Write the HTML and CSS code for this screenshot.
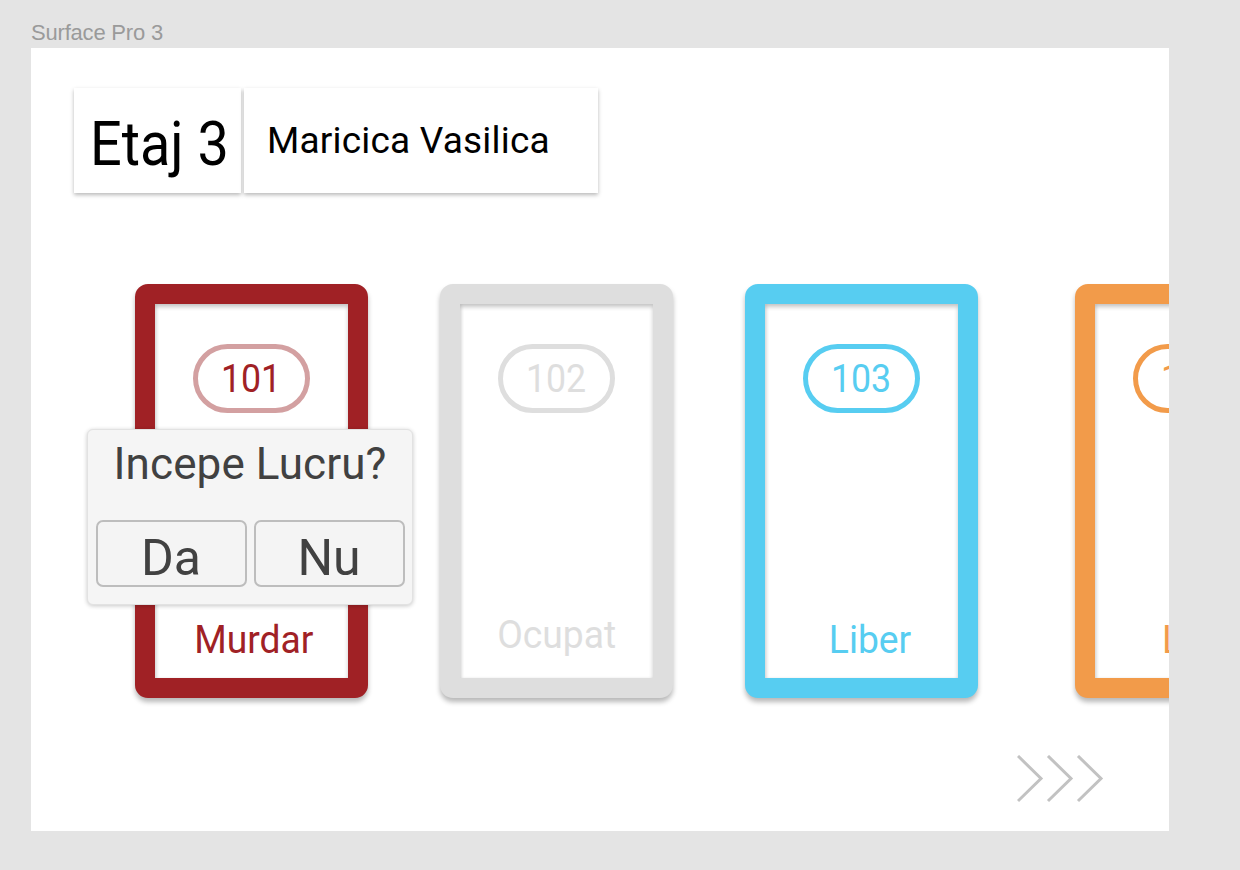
FILE: index.html
```html
<!DOCTYPE html>
<html lang="ro">
<head>
<meta charset="utf-8">
<title>Etaj 3</title>
<link rel="stylesheet" href="styles.css">
</head>
<body>
<div class="device-label">Surface Pro 3</div>
<div class="frame">
  <header class="header">
    <div class="hbox floor"><span class="floor-text">Etaj 3</span></div>
    <div class="hbox person">Maricica Vasilica</div>
  </header>
  <section class="rooms">
    <div class="room room-dirty">
      <div class="pill"><span class="narrow">101</span></div>
      <div class="status"><span class="narrow">Murdar</span></div>
      <div class="popup">
        <div class="popup-title">Incepe Lucru?</div>
        <div class="popup-actions">
          <button class="btn">Da</button>
          <button class="btn">Nu</button>
        </div>
      </div>
    </div>
    <div class="room room-busy">
      <div class="pill"><span class="narrow">102</span></div>
      <div class="status"><span class="narrow">Ocupat</span></div>
    </div>
    <div class="room room-free">
      <div class="pill"><span class="narrow">103</span></div>
      <div class="status"><span class="narrow">Liber</span></div>
    </div>
    <div class="room room-other">
      <div class="pill"><span class="narrow">104</span></div>
      <div class="status"><span class="narrow">Lucru</span></div>
    </div>
  </section>
  <footer class="nav">
    <svg class="chevrons" width="88" height="48" viewBox="0 0 88 48" fill="none" stroke="#c2c2c2" stroke-width="3">
      <path d="M1 1 L24 23.5 L1 46"/>
      <path d="M31 1 L54 23.5 L31 46"/>
      <path d="M61 1 L84 23.5 L61 46"/>
    </svg>
  </footer>
</div>
</body>
</html>
```
FILE: styles.css
```css
html, body {
  margin: 0;
  padding: 0;
}
body {
  background: #e4e4e4;
  width: 1240px;
  height: 870px;
  overflow: hidden;
}
.device-label {
  font-family: "Liberation Sans", Arial, sans-serif;
  font-size: 22px;
  letter-spacing: -0.2px;
  color: #9a9a9a;
  height: 48px;
  padding: 22px 0 0 31px;
  line-height: 22px;
  box-sizing: border-box;
}
.frame {
  margin-left: 31px;
  width: 1138px;
  height: 783px;
  background: #fff;
  overflow: hidden;
  display: flex;
  flex-direction: column;
  font-family: Roboto, "Noto Sans", sans-serif;
}
.header {
  display: flex;
  gap: 3px;
  margin: 40px 0 0 43px;
}
.hbox {
  height: 105px;
  background: #fff;
  box-shadow: 0 2px 4px rgba(0,0,0,0.28);
  display: flex;
  align-items: center;
  color: #000;
  box-sizing: border-box;
}
.floor {
  width: 167px;
  padding: 6px 0 0 16px;
  font-size: 62px;
}
.floor-text {
  display: inline-block;
  transform: scaleX(0.9);
  transform-origin: left center;
  white-space: nowrap;
}
.person {
  width: 354px;
  padding-left: 23px;
  font-size: 37px;
  letter-spacing: 0.2px;
}
.rooms {
  display: flex;
  gap: 72px;
  margin: 91px 0 0 104px;
}
.room {
  position: relative;
  flex: 0 0 auto;
  width: 233px;
  height: 414px;
  box-sizing: border-box;
  border: 20px solid;
  border-radius: 13px;
  background: #fff;
  box-shadow: 0 4px 5px rgba(0,0,0,0.28), inset 0 3px 4px rgba(0,0,0,0.22), inset 2px 0 3px rgba(0,0,0,0.06);
  display: flex;
  flex-direction: column;
  align-items: center;
}
.narrow {
  display: inline-block;
  white-space: nowrap;
}
.pill {
  margin-top: 40px;
  width: 117px;
  height: 69px;
  box-sizing: border-box;
  border: 5px solid;
  border-radius: 35px;
  display: flex;
  align-items: center;
  justify-content: center;
  font-size: 38px;
  line-height: 1;
}
.pill .narrow {
  transform: scaleX(0.94);
}
.status {
  margin-top: auto;
  margin-bottom: 15px;
  font-size: 38px;
  line-height: 46px;
}
.status .narrow {
  transform: scaleX(0.98);
}
.room-dirty { border-color: #a02125; color: #a02125; }
.room-dirty .pill { border-color: #d3a0a1; color: #a02125; }
.room-dirty .status { padding-left: 4px; }
.room-busy { border-color: #dedede; color: #dedede; }
.room-busy .pill { border-color: #dedede; }
.room-busy .status { margin-bottom: 20px; }
.room-free { border-color: #57cdf1; color: #57cdf1; }
.room-free .pill { border-color: #57cdf1; }
.room-free .status { padding-left: 18px; }
.room-other { border-color: #f29b4a; color: #f29b4a; margin-left: 25px; }
.room-other .pill { border-color: #f29b4a; }
.room-other .status { padding-left: 34px; }

.popup {
  position: absolute;
  left: -68px;
  top: 125px;
  width: 326px;
  height: 176px;
  box-sizing: border-box;
  background: #f5f5f5;
  border: 1px solid #e2e2e2;
  border-radius: 6px;
  box-shadow: 0 1px 4px rgba(0,0,0,0.22);
  display: flex;
  flex-direction: column;
  align-items: center;
  padding-top: 8px;
}
.popup-title {
  font-size: 44px;
  line-height: 52px;
  letter-spacing: 0.1px;
  color: #414141;
  white-space: nowrap;
}
.popup-actions {
  display: flex;
  gap: 7px;
  margin-top: 30px;
}
.btn {
  display: flex;
  justify-content: center;
  align-items: flex-start;
  width: 151px;
  height: 67px;
  box-sizing: border-box;
  border: 2px solid #bdbdbd;
  border-radius: 7px;
  background: #f4f4f4;
  font-family: Roboto, "Noto Sans", sans-serif;
  font-size: 50px;
  color: #414141;
  padding: 11px 0 0;
  margin: 0;
  line-height: 50px;
}
.nav {
  display: flex;
  justify-content: flex-end;
  margin-top: 57px;
  padding-right: 64px;
}
.chevrons {
  display: block;
}
```
